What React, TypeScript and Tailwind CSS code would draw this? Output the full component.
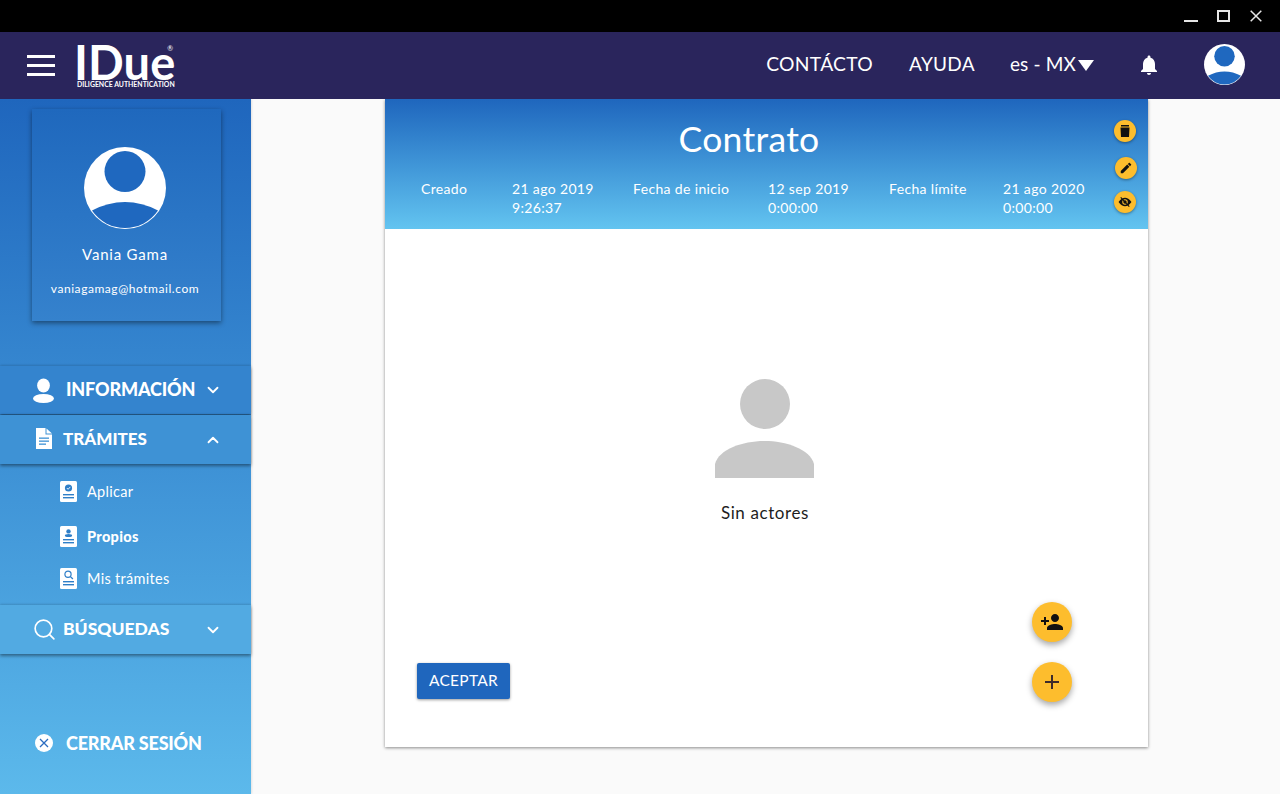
import React from "react";
import { Search, ChevronDown, ChevronUp } from "lucide-react";

function Avatar({ size }: { size: number }) {
  return (
    <svg width={size} height={size} viewBox="0 0 82 82" className="block">
      <circle cx="41" cy="41" r="41" fill="#fff" />
      <circle cx="41" cy="24.5" r="20.5" fill="#1f68bf" />
      <path d="M8 63.5 Q24 55 41 55 Q58 55 74 63.5 A39.800 39.800 0 0 1 8 63.5Z" fill="#1f68bf" />
    </svg>
  );
}

function Doc({ kind }: { kind: "check" | "person" | "search" }) {
  return (
    <svg width="17" height="21" viewBox="0 0 17 21" className="block">
      <rect width="17" height="21" rx="1.5" fill="#fff" />
      {kind === "check" && <circle cx="8.5" cy="7" r="3.6" fill="#2f7fc8" />}
      {kind === "check" && <path d="M6.8 7l1.3 1.3 2.2-2.4" stroke="#fff" strokeWidth="0.9" fill="none" />}
      {kind === "person" && <circle cx="8.5" cy="5.4" r="2.2" fill="#2f7fc8" />}
      {kind === "person" && <ellipse cx="8.5" cy="9.6" rx="3.6" ry="1.5" fill="#2f7fc8" />}
      {kind === "search" && <circle cx="8" cy="6.2" r="3.1" fill="none" stroke="#2f7fc8" strokeWidth="1.2" />}
      {kind === "search" && <path d="M10.2 8.4l2.7 2.6" stroke="#2f7fc8" strokeWidth="1.3" />}
      <rect x="3" y="13" width="11" height="1.4" fill="#2f7fc8" />
      <rect x="3" y="16" width="11" height="1.4" fill="#2f7fc8" />
    </svg>
  );
}

function MenuRow({ icon, label, open, h, pl, gap, bg, text }: { icon: React.ReactNode; label: string; open?: boolean; h: string; pl: string; gap: string; bg: string; text: string }) {
  return (
    <div className={`flex items-center justify-between pr-[29px] relative shadow-[0_2px_3px_rgba(0,0,0,0.4),0_-1px_2px_rgba(0,0,0,0.12)] ${h} ${pl} ${bg}`}>
      <div className={`flex items-center ${gap}`}>
        {icon}
        <span className={`font-black text-white mb-[1px] ${text}`}>{label}</span>
      </div>
      {open ? <ChevronUp size={18} strokeWidth={2.4} color="#fff" /> : <ChevronDown size={18} strokeWidth={2.4} color="#fff" />}
    </div>
  );
}

function SubRow({ kind, label, bold, cls }: { kind: "check" | "person" | "search"; label: string; bold?: boolean; cls: string }) {
  return (
    <div className={`flex items-center gap-[10px] pl-[60px] ${cls}`}>
      <Doc kind={kind} />
      <span className={`text-[14.5px] text-white tracking-[0.3px] ${bold ? "font-black" : "font-normal"}`}>{label}</span>
    </div>
  );
}

function MiniFab({ children, cls }: { children: React.ReactNode; cls: string }) {
  return (
    <div className={`w-[22px] h-[22px] rounded-full bg-[#fdbd2d] flex items-center justify-center shadow-[0_1px_3px_rgba(0,0,0,0.4)] ${cls}`}>
      {children}
    </div>
  );
}

function Fab({ path, color }: { path: string; color: string }) {
  return (
    <div className="w-10 h-10 rounded-full bg-[#fdbd2d] flex items-center justify-center shadow-[0_3px_6px_rgba(0,0,0,0.35)]">
      <svg width="24" height="24" viewBox="0 0 24 24" fill={color}><path d={path} /></svg>
    </div>
  );
}

export default function App() {
  return (
    <div className="w-[1280px] h-[794px] overflow-hidden flex flex-col bg-[#fafafa] font-['Lato','Liberation_Sans',sans-serif]">
      <div className="h-8 bg-black flex items-start justify-end shrink-0">
        <div className="flex items-start pr-[18px] pt-[10px]">
          <div className="w-[14px] h-[2px] bg-[#e6e6e6] mt-[10px]" />
          <div className="w-[13px] h-[12px] border-2 border-[#e6e6e6] ml-[19px]" />
          <svg width="12" height="12" viewBox="0 0 12 12" className="ml-[20px]"><path d="M0.7 0.7l10.6 10.6M11.3 0.7L0.7 11.3" stroke="#e6e6e6" strokeWidth="1.5" /></svg>
        </div>
      </div>

      <header className="h-[67px] bg-[#2a255c] flex items-center shrink-0 relative z-10 text-white">
        <div className="ml-[27px] w-[28px] flex flex-col gap-[6px]">
          <div className="h-[3px] bg-white" />
          <div className="h-[3px] bg-white" />
          <div className="h-[3px] bg-white" />
        </div>
        <div className="ml-[19px] w-[101px] flex flex-col relative">
          <span className="text-[47px] leading-[36px] font-bold tracking-[0.1px] h-[36px]">IDue</span>
          <span className="text-[6.9px] leading-[7px] font-bold whitespace-nowrap ml-[3px] mt-[1px]">DILIGENCE AUTHENTICATION</span>
          <span className="absolute right-[2px] top-[0px] text-[7px] leading-[8px]">®</span>
        </div>
        <div className="ml-auto flex items-center">
          <span className="text-[19.3px] tracking-[0.3px] mb-[3px]">CONTÁCTO</span>
          <span className="text-[19px] tracking-[0.3px] ml-[36px] mb-[3px]">AYUDA</span>
          <span className="text-[19px] tracking-[0.15px] ml-[35px] mb-[3px]">es - MX</span>
          <svg width="16" height="11" viewBox="0 0 16 11" className="ml-[2px]"><path d="M0 0h16L8 11z" fill="#fff" /></svg>
          <svg width="24" height="24" viewBox="0 0 24 24" fill="#fff" className="ml-[43px] mb-[2px]"><path d="M12 22c1.100 0 2-.9 2-2h-4c0 1.100.89 2 2 2zm6-6v-5c0-3.070-1.640-5.640-4.500-6.320V4c0-.83-.67-1.500-1.500-1.500s-1.500.67-1.500 1.500v.68C7.630 5.360 6 7.920 6 11v5l-2 2v1h16v-1l-2-2z" /></svg>
          <div className="ml-[43px] mr-[35px] mb-[2px]"><Avatar size={41} /></div>
        </div>
      </header>

      <div className="flex flex-1 min-h-0">
        <aside className="w-[251px] shrink-0 bg-gradient-to-b from-[#1f66bd] to-[#5cb9eb] flex flex-col shadow-[1px_0_2px_rgba(0,0,0,0.1)]">
          <div className="ml-[32px] mt-[10px] w-[189px] h-[212px] shrink-0 bg-gradient-to-b from-[#1f68bd] to-[#3582cd] shadow-[0_2px_5px_rgba(0,0,0,0.45)] flex flex-col items-center text-white pr-[3px]">
            <div className="mt-[38px]"><Avatar size={82} /></div>
            <div className="mt-[15px] text-[15px] leading-[20px] tracking-[0.8px]">Vania Gama</div>
            <div className="mt-[17px] text-[12px] leading-[16px] tracking-[0.55px] whitespace-nowrap">vaniagamag@hotmail.com</div>
          </div>

          <div className="mt-[45px]">
            <MenuRow
              h="h-[48px]" pl="pl-[33px]" gap="gap-[12px]" bg="bg-[#3484ce]" label="INFORMACIÓN" text="text-[18px] tracking-[-0.15px]"
              icon={<svg width="21" height="25" viewBox="0 0 23 25" preserveAspectRatio="none" fill="#fff"><circle cx="11.5" cy="7.500" r="7" /><ellipse cx="11.5" cy="20.500" rx="11.5" ry="4.500" /></svg>}
            />
            <div className="h-[1px]" />
            <MenuRow
              h="h-[49px]" pl="pl-[36px]" gap="gap-[11px]" bg="bg-[#3e92d5]" label="TRÁMITES" open text="text-[17px] tracking-[0px]"
              icon={<svg width="16" height="21" viewBox="0 0 16 21" className="mb-[2px]"><path d="M0 0h9.500v6.500H16V21H0z" fill="#fff" /><path d="M10.500 0.500L16 5.500h-5.500z" fill="#fff" /><rect x="3" y="9.500" width="10" height="1.300" fill="#3e92d5" /><rect x="3" y="12.500" width="10" height="1.300" fill="#3e92d5" /><rect x="3" y="15.500" width="7" height="1.300" fill="#3e92d5" /></svg>}
            />
          </div>
          <SubRow kind="check" label="Aplicar" cls="mt-[17px] h-[21px]" />
          <SubRow kind="person" label="Propios" bold cls="mt-[24px] h-[21px]" />
          <SubRow kind="search" label="Mis trámites" cls="mt-[21px] h-[21px]" />
          <div className="mt-[16px]">
            <MenuRow
              h="h-[49px]" pl="pl-[32px]" gap="gap-[6px]" bg="bg-[#52aae2]" label="BÚSQUEDAS" text="text-[17.5px] tracking-[0px]"
              icon={<Search size={25} strokeWidth={1.6} color="#fff" />}
            />
          </div>
          <div className="mt-[77px] flex items-center pl-[35px] gap-[13px]">
            <svg width="18" height="18" viewBox="0 0 18 18"><circle cx="9" cy="9" r="9" fill="#fff" /><path d="M5 5l8 8M13 5l-8 8" stroke="#2b6cc0" strokeWidth="1.3" /></svg>
            <span className="text-[18px] leading-[24px] font-black text-white tracking-[-0.2px]">CERRAR SESIÓN</span>
          </div>
        </aside>

        <main className="flex-1 min-w-0">
          <section className="ml-[134px] w-[763px] h-[648px] bg-white shadow-[0_1px_3px_rgba(0,0,0,0.45)] flex flex-col">
            <div className="h-[130px] bg-gradient-to-b from-[#1f66bd] to-[#63c4f0] flex text-white">
              <div className="w-[730px] shrink-0 flex flex-col">
                <div className="h-[38px] mt-[21px] text-center text-[35.5px] leading-[38px] tracking-[0.3px] pr-[2px]">Contrato</div>
                <div className="mt-[21px] pl-[36px] flex text-[14px] leading-[19px] tracking-[0.35px]">
                  <div className="w-[91px]">Creado</div>
                  <div className="w-[121px]">21 ago 2019<br />9:26:37</div>
                  <div className="w-[135px]">Fecha de inicio</div>
                  <div className="w-[121px]">12 sep 2019<br />0:00:00</div>
                  <div className="w-[114px]">Fecha límite</div>
                  <div>21 ago 2020<br />0:00:00</div>
                </div>
              </div>
              <div className="flex flex-col items-start">
                <MiniFab cls="mt-[21px] ml-[-1px]">
                  <svg width="10" height="12" viewBox="0 0 10 12" fill="#111"><path d="M1 0h8v1.500H1zM0.500 2.500h9L9 12H1z" /></svg>
                </MiniFab>
                <MiniFab cls="mt-[15px]">
                  <svg width="14" height="14" viewBox="0 0 24 24" fill="#111"><path d="M3 17.250V21h3.750L17.810 9.940l-3.750-3.750L3 17.250zM20.710 7.040c.39-.39.39-1.020 0-1.410l-2.340-2.340c-.39-.39-1.020-.39-1.410 0l-1.830 1.830 3.750 3.750 1.830-1.830z" /></svg>
                </MiniFab>
                <MiniFab cls="mt-[12px] ml-[-1px]">
                  <svg width="14" height="12" viewBox="0 0 16 14"><path d="M0.500 7C3 3.400 5.400 2 8 2s5 1.400 7.500 5c-2.500 3.600-4.900 5-7.500 5S3 10.600 0.500 7z" fill="#111" /><circle cx="8" cy="7" r="3.200" fill="#fdbd2d" /><circle cx="8" cy="7" r="2" fill="#111" /><path d="M3 1.500l10 11" stroke="#111" strokeWidth="1.200" /></svg>
                </MiniFab>
              </div>
            </div>

            <div className="flex flex-col items-center">
              <svg width="99" height="99" viewBox="0 0 99 99" className="mt-[150px] block ml-[-4px]">
                <circle cx="50" cy="25" r="25" fill="#c8c8c8" />
                <path d="M0 99V85C4 70 28 62 49.500 62S95 70 99 85V99Z" fill="#c8c8c8" />
              </svg>
              <div className="mt-[24px] text-[17px] leading-[22px] text-[#1d1d1d] tracking-[0.6px] mr-[3px]">Sin actores</div>
            </div>

            <div className="flex items-end justify-between pl-[32px] pr-[76px] mt-[78px]">
              <div className="w-[93px] h-9 mb-[3px] rounded-[2px] bg-[#1f66bd] text-white text-[15.5px] flex items-center justify-center shadow-[0_1px_3px_rgba(0,0,0,0.4)] tracking-[0.3px]">ACEPTAR</div>
              <div className="flex flex-col gap-5">
                <Fab color="#111" path="M15 12c2.210 0 4-1.790 4-4s-1.790-4-4-4-4 1.790-4 4 1.790 4 4 4zm-9-2V7H4v3H1v2h3v3h2v-3h3v-2H6zm9 4c-2.670 0-8 1.340-8 4v2h16v-2c0-2.660-5.330-4-8-4z" />
                <Fab color="#3d2a2a" path="M19 13h-6v6h-2v-6H5v-2h6V5h2v6h6v2z" />
              </div>
            </div>
          </section>
        </main>
      </div>
    </div>
  );
}
